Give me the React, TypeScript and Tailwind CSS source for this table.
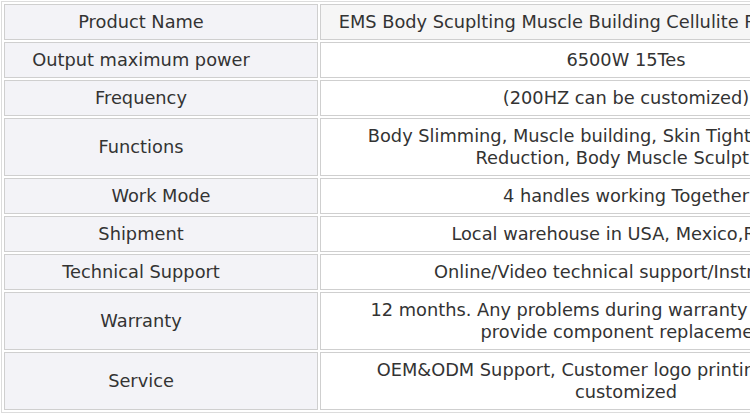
const rows: { name: string; value: string[]; nameClass?: string; valueClass?: string }[] = [
  {
    name: "Product Name",
    value: ["EMS Body Scuplting Muscle Building Cellulite Reduction Machine"],
    valueClass: "bg-[#f6f6f6]",
  },
  { name: "Output maximum power", value: ["6500W 15Tes"] },
  { name: "Frequency", value: ["(200HZ can be customized)"] },
  {
    name: "Functions",
    value: ["Body Slimming, Muscle building, Skin Tightening, Cellulite", "Reduction, Body Muscle Sculpting"],
  },
  { name: "Work Mode", value: ["4 handles working Together"], nameClass: "pl-[40px]" },
  { name: "Shipment", value: ["Local warehouse in USA, Mexico,Russia"] },
  { name: "Technical Support", value: ["Online/Video technical support/Instructions"] },
  {
    name: "Warranty",
    value: ["12 months. Any problems during warranty period, we will", "provide component replacement"],
  },
  {
    name: "Service",
    value: ["OEM&ODM Support, Customer logo printing, box can be", "customized"],
  },
];

export default function App() {
  return (
    <div className="w-[750px] h-[414px] overflow-hidden bg-white">
      <table
        className="m-px border border-[#dcdcdc] border-separate border-spacing-[2px] table-fixed w-[934px] text-[#333] text-[17.8px] leading-[22px]"
        style={{ fontFamily: '"DejaVu Sans", Verdana, sans-serif' }}
      >
        <colgroup>
          <col className="w-[314px]" />
          <col className="w-[612px]" />
        </colgroup>
        <tbody>
          {rows.map((r) => (
            <tr key={r.name}>
              <td
                className={
                  "border border-[#cfcfcf] bg-[#f3f3f7] text-center align-middle py-[6px] pr-[40px] " +
                  (r.nameClass ?? "pl-0")
                }
              >
                {r.name}
              </td>
              <td
                className={
                  "border border-[#cfcfcf] text-center align-middle py-[6px] px-[10px] whitespace-nowrap " +
                  (r.valueClass ?? "bg-white")
                }
              >
                {r.value.map((line, i) => (
                  <div key={i}>{line}</div>
                ))}
              </td>
            </tr>
          ))}
        </tbody>
      </table>
    </div>
  );
}
